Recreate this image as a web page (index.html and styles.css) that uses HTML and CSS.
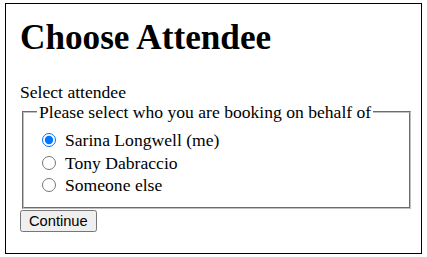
FILE: index.html
```html
<!DOCTYPE html>
<html lang="en">
<head>
<meta charset="utf-8">
<title>Choose Attendee</title>
<link rel="stylesheet" href="styles.css">
</head>
<body>
<div class="card">
  <h1 class="title">Choose Attendee</h1>
  <form class="form">
    <div class="field-label">Select attendee</div>
    <fieldset class="group">
      <legend class="group-legend">Please select who you are booking on behalf of</legend>
      <div class="option"><input type="radio" name="attendee" id="a1" checked><label for="a1">Sarina Longwell (me)</label></div>
      <div class="option"><input type="radio" name="attendee" id="a2"><label for="a2">Tony Dabraccio</label></div>
      <div class="option"><input type="radio" name="attendee" id="a3"><label for="a3">Someone else</label></div>
    </fieldset>
    <button type="button" class="btn">Continue</button>
  </form>
</div>
</body>
</html>
```

FILE: styles.css
```css
html, body {
  background: #fff;
}
body {
  margin: 3px 5px 0 5px;
  font-family: "Liberation Serif", "Times New Roman", serif;
  font-size: 17.6px;
  color: #000;
}
.card {
  box-sizing: border-box;
  width: 417px;
  border: 1px solid #000;
  padding: 14px 8px 21px 14px;
}
.title {
  font-size: 35.2px;
  font-weight: bold;
  margin: 0 0 24px 0;
  line-height: 40px;
}
.form {
  margin: 0;
}
.field-label {
  line-height: 20px;
}
.group {
  margin: 0 2px;
  padding: 7px 13px 10px 13px;
  border: 2px groove #c0c0c0;
}
.group-legend {
  padding: 0 2px;
  line-height: 20px;
}
.option {
  line-height: 22.67px;
}
.option input {
  width: 14px;
  height: 14px;
  margin: 3px 9px 0 5px;
  vertical-align: -1px;
}
.btn {
  font-family: "Liberation Sans", Arial, sans-serif;
  font-size: 14.67px;
  margin: 1px 0 0 0;
  padding: 1px 7px;
}
```
